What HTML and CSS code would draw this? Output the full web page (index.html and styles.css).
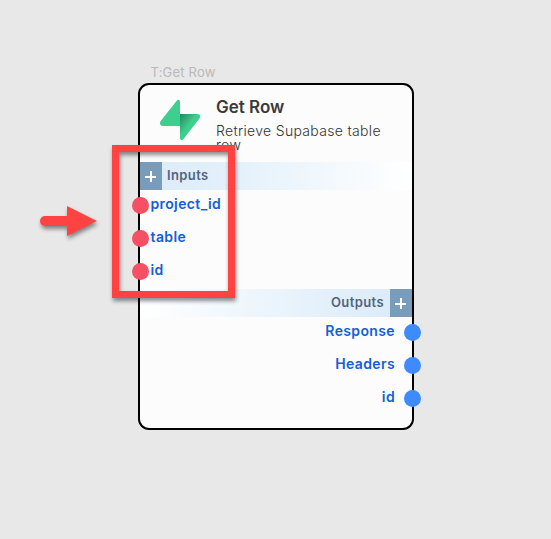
FILE: index.html
```html
<!DOCTYPE html>
<html lang="en">
<head>
<meta charset="utf-8">
<title>Get Row</title>
<link rel="stylesheet" href="styles.css">
</head>
<body>
<main class="canvas">
  <div class="node-label"><span>T:Get Row</span></div>
  <section class="node">
    <header class="node-header">
      <svg class="logo" width="42" height="42" viewBox="0 0 42 42">
        <defs><linearGradient id="shade" x1="20" y1="15" x2="32" y2="24" gradientUnits="userSpaceOnUse"><stop offset="0" stop-color="#24805a"/><stop offset="1" stop-color="#3ecf8e"/></linearGradient></defs>
        <path d="M21 15h17.200c2.800 0 3.800 2.400 2.200 4.500L24.300 40.200c-1.200 1.500-3.300.9-3.300-1.100z" fill="url(#shade)"/>
        <path d="M21 27H4.200C1.200 27 .1 24.200 1.700 22L17.700 1.700C18.900.1 21 .9 21 2.700z" fill="#3ecf8e"/>
      </svg>
      <div class="heading">
        <h1><span>Get Row</span></h1>
        <p><span>Retrieve Supabase table row</span></p>
      </div>
    </header>
    <div class="bar inputs"><i class="add"></i><span>Inputs</span></div>
    <ul class="ports in">
      <li><i class="dot"></i><span>project_id</span></li>
      <li><i class="dot"></i><span>table</span></li>
      <li><i class="dot"></i><span>id</span></li>
    </ul>
    <div class="bar outputs"><span>Outputs</span><i class="add"></i></div>
    <ul class="ports out">
      <li><span>Response</span><i class="dot"></i></li>
      <li><span>Headers</span><i class="dot"></i></li>
      <li><span>id</span><i class="dot"></i></li>
    </ul>
  </section>
  <div class="highlight"></div>
  <svg class="arrow" width="57" height="30" viewBox="0 0 57 30"><path d="M5 10H27V0L57 15 27 30V20H5A5 5 0 0 1 5 10Z" fill="#ff4343"/></svg>
</main>
</body>
</html>
```
FILE: styles.css
```css
* { box-sizing: border-box; }
body { margin: 0; font-family: Inter, "Liberation Sans", sans-serif; }
.canvas { position: relative; width: 551px; height: 539px; background: #e8e8e8; overflow: hidden; }
.node-label { position: absolute; left: 150.5px; top: 64px; font-size: 13px; line-height: 17px; letter-spacing: .2px; color: #b9b9b9; font-weight: 400; white-space: nowrap; }
.node { position: absolute; left: 138px; top: 83px; width: 276px; height: 347px; border: 2px solid #000; border-radius: 11px; background: #fcfcfc; }
.node-header { display: flex; height: 77px; padding: 14px 20px 0 19px; }
.logo { flex: none; display: block; }
.heading { margin-left: 15px; width: 180px; }
h1 { margin: -3px 0 0; font-size: 17px; line-height: 22px; font-weight: 600; color: #3a3a3a; }
p { margin: 6px 0 0; font-size: 14px; line-height: 14px; letter-spacing: .32px; font-weight: 300; color: #333; }
.bar { display: flex; align-items: center; height: 28px; font-size: 13px; font-weight: 600; letter-spacing: .4px; color: #526480; }
.inputs { background: linear-gradient(90deg, #d9eaf7, #e6f2fb 40%, #fff); gap: 5px; }
.outputs { background: linear-gradient(270deg, #d9eaf7, #e6f2fb 40%, #fff); justify-content: flex-end; gap: 5.5px; }
.bar span { line-height: 26px; margin-bottom: 2px; }
.add { position: relative; width: 22px; height: 28px; background: #789cb9; }
.outputs .add { width: 22.5px; }
.add::before, .add::after { content: ""; position: absolute; background: #fff; }
.add::before { left: 5px; top: 14px; width: 11px; height: 2px; }
.add::after { left: 10px; top: 9px; width: 2px; height: 11px; }
.ports { list-style: none; margin: 0; padding: 0; height: 99px; }
.ports li { display: flex; align-items: center; height: 33px; font-size: 14px; font-weight: 600; letter-spacing: .37px; color: #1260d6; }
.ports span { line-height: 27px; margin-bottom: 6px; }
.dot { width: 17px; height: 17px; border-radius: 50%; margin-bottom: 3px; }
.in .dot { background: #f55063; margin-left: -8px; margin-right: 1.5px; }
.out li { justify-content: flex-end; }
.out .dot { background: #3d8bfd; margin-left: 9px; margin-right: -9px; }
.highlight { position: absolute; left: 112px; top: 145px; width: 123px; height: 153px; border: 7px solid #ff4343; filter: drop-shadow(1px 3px 2px rgba(0, 0, 0, .45)); }
.arrow { position: absolute; left: 40px; top: 206px; overflow: visible; filter: drop-shadow(1px 3px 2px rgba(0, 0, 0, .45)); }
```
